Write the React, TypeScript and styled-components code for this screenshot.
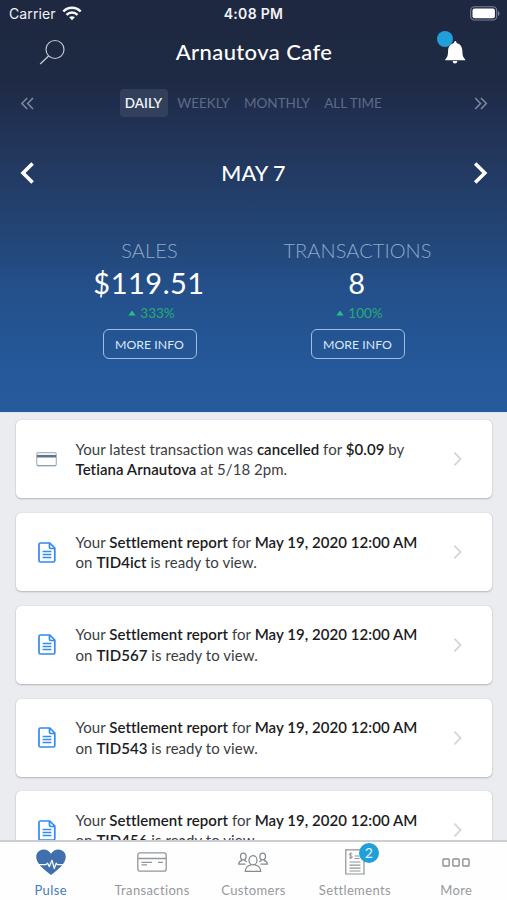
import React from "react";
import styled, { createGlobalStyle } from "styled-components";

const GlobalStyle = createGlobalStyle`
  * { box-sizing: border-box; }
  body { margin: 0; font-family: Lato, "Open Sans", sans-serif; }
  button { font-family: inherit; margin: 0; padding: 0; border: 0; background: none; color: inherit; }
  svg { display: block; flex: none; }
`;

const Screen = styled.div`
  display: flex;
  flex-direction: column;
  width: 507px;
  height: 900px;
  overflow: hidden;
  background: #ebecef;
`;

const Hero = styled.header`
  flex: none;
  height: 412px;
  background: linear-gradient(180deg, #1e2840 0, #1e2943 75px, #202f50 112px, #23365b 150px, #223f6c 200px, #234779 245px, #24508b 290px, #245594 340px, #25599b 375px, #265a9c 412px);
  border-bottom: 1px solid #265a9c;
  box-shadow: 0 1px 0 #dfe8f4;
`;

const StatusBar = styled.div`
  display: grid;
  grid-template-columns: 1fr auto 1fr;
  align-items: center;
  height: 27px;
  padding: 0 7px 0 9px;
  font-family: Inter, sans-serif;
  font-size: 14px;
  color: #f1f3f7;
`;

const Carrier = styled.div`
  display: flex;
  align-items: center;
  gap: 6px;
  letter-spacing: 0.1px;
`;

const Clock = styled.div`
  margin-right: 2px;
  font-weight: 600;
  font-size: 14px;
  letter-spacing: 0.3px;
`;

const Battery = styled.div`
  justify-self: end;
`;

const TitleBar = styled.div`
  display: grid;
  grid-template-columns: 60px 1fr 60px;
  align-items: center;
  height: 50px;
  padding: 0 22px;
`;

const Title = styled.h1`
  margin: 0 0 2px 1px;
  text-align: center;
  font-size: 22px;
  font-weight: 500;
  letter-spacing: 0.4px;
  color: #fff;
`;

const IconButton = styled.button<{ $side: "left" | "right" }>`
  display: flex;
  justify-content: ${(p) => (p.$side === "left" ? "flex-end" : "flex-start")};
  padding: ${(p) => (p.$side === "left" ? "0 17px 0 0" : "0 0 0 19px")};
`;

const BellWrap = styled.span`
  position: relative;
  display: block;
`;

const BellDot = styled.span`
  position: absolute;
  left: -7px;
  top: -9px;
  width: 16px;
  height: 16px;
  border-radius: 50%;
  background: #219fd8;
`;

const PeriodBar = styled.div`
  display: flex;
  align-items: center;
  justify-content: space-between;
  height: 52px;
  padding: 0 19px 0 21px;
`;

const Periods = styled.div`
  display: flex;
  padding-left: 2px;
`;

const Period = styled.button<{ $active?: boolean; $width: number }>`
  width: ${(p) => p.$width}px;
  height: 28px;
  border-radius: 4px;
  white-space: nowrap;
  font-size: 13.5px;
  font-weight: ${(p) => (p.$active ? 600 : 400)};
  letter-spacing: 0;
  color: ${(p) => (p.$active ? "#f0f3f8" : "#5f6b86")};
  background: ${(p) => (p.$active ? "#33405c" : "transparent")};
`;

const DateBar = styled.div`
  display: flex;
  align-items: center;
  justify-content: space-between;
  height: 50px;
  margin-top: 19px;
  padding: 0 19px 0 20px;
`;

const DateLabel = styled.div`
  margin: 0 1px 1px 0;
  font-size: 21.5px;
  font-weight: 500;
  letter-spacing: 0.1px;
  color: #fff;
`;

const Stats = styled.section`
  display: grid;
  grid-template-columns: 208px 208px;
  justify-content: center;
  margin-top: 39px;
`;

const Stat = styled.div`
  display: flex;
  flex-direction: column;
  align-items: center;
`;

const StatName = styled.div`
  height: 26px;
  line-height: 26px;
  font-size: 20px;
  font-weight: 300;
  letter-spacing: 0.08px;
  color: #8eaacb;
`;

const StatValue = styled.div`
  height: 40px;
  line-height: 40px;
  font-size: 29px;
  letter-spacing: 0.5px;
  margin-right: 1px;
  color: #fff;
`;

const StatChange = styled.div`
  display: flex;
  align-items: center;
  gap: 4px;
  height: 20px;
  margin-left: 4px;
  font-size: 13.5px;
  color: #27ab77;
`;

const MoreInfo = styled.button`
  width: 94px;
  height: 30px;
  margin-top: 6px;
  border: 1.5px solid #a4bbdb;
  border-radius: 6px;
  font-size: 12.3px;
  color: #dde7f4;
`;

const Feed = styled.main`
  flex: 1;
  min-height: 0;
  overflow: hidden;
  display: flex;
  flex-direction: column;
  gap: 14.8px;
  padding: 8.3px 15px 0 15.5px;
`;

const Card = styled.article`
  flex: none;
  display: grid;
  grid-template-columns: 60px 1fr 14px;
  align-items: center;
  height: 78px;
  padding-right: 26px;
  border-radius: 5px;
  background: #fff;
  box-shadow: 0 0 1px #aeb0b3, 0 1px 2px #b5b7ba;
`;

const CardIcon = styled.div`
  display: flex;
  justify-content: center;
  width: 62px;
`;

const Message = styled.p`
  margin: 0;
  white-space: nowrap;
  font-size: 15px;
  line-height: 20.6px;
  letter-spacing: 0.05px;
  color: #3c3d3f;
  b { font-weight: 600; color: #1b1c1e; }
`;

const TabBar = styled.nav`
  flex: none;
  display: grid;
  grid-template-columns: repeat(5, 1fr);
  height: 60px;
  border-top: 2px solid #cdced3;
  background: #fefefe;
`;

const Tab = styled.button<{ $active?: boolean }>`
  display: flex;
  flex-direction: column;
  align-items: center;
  color: ${(p) => (p.$active ? "#447bb9" : "#96999d")};
  font-size: 13px;
  letter-spacing: 0.36px;
`;

const TabIcon = styled.span`
  position: relative;
  display: flex;
  align-items: center;
  height: 40px;
`;

const Count = styled.span`
  position: absolute;
  left: 14px;
  top: 1px;
  width: 20px;
  height: 20px;
  border-radius: 50%;
  background: #219fd8;
  color: #e3f3fb;
  font-size: 14px;
  line-height: 20px;
  letter-spacing: 0;
`;

const Wifi = () => (
  <svg width="20" height="15" viewBox="0 0 20 15" fill="none" stroke="#f4f6fa" strokeWidth="2.5">
    <path d="M1.3 5.5C6.2.4 13.8.4 18.7 5.5" />
    <path d="M4.5 8.8c3.1-3.1 7.9-3.1 11 0" />
    <path d="M10 14.3l-2.9-3c1.7-1.5 4.1-1.5 5.8 0z" fill="#f4f6fa" stroke="none" />
  </svg>
);

const BatteryIcon = () => (
  <svg width="30" height="15" viewBox="0 0 30 15">
    <rect x="0.7" y="0.7" width="26" height="13.3" rx="3.7" fill="none" stroke="#7b8293" strokeWidth="1.1" />
    <rect x="2.5" y="2.5" width="22.4" height="9.7" rx="2" fill="#fff" />
    <path d="M28 5v5c2-.8 2-4.2 0-5z" fill="#7b8293" />
  </svg>
);

const Search = () => (
  <svg width="26" height="27" viewBox="0 0 26 27" fill="none" stroke="#c0c5d0" strokeWidth="1.2">
    <circle cx="16" cy="10.5" r="9" />
    <path d="M9.6 16.9L1.2 25" strokeWidth="1.4" />
  </svg>
);

const Bell = () => (
  <svg width="22" height="25" viewBox="0 0 22 25" fill="#fff">
    <path d="M11.300 1c.8 0 1.200.8 1.300 2 3.600.9 5.600 3.800 5.700 7.600.1 4.400.6 7 2.900 8.800v.8H1.200v-.8c2.300-1.800 2.800-4.400 2.900-8.800.1-3.800 2.300-6.700 5.900-7.600.1-1.200.5-2 1.300-2z" />
    <path d="M8.700 21h4.600c-.1 1.700-1 2.500-2.300 2.500S8.800 22.700 8.700 21z" />
  </svg>
);

const DoubleChevron = ({ flip }: { flip?: boolean }) => (
  <svg width="14" height="13" viewBox="0 0 14 13" fill="none" stroke="#7d879e" strokeWidth="1.600">
    {flip ? <path d="M1.2 1l5.3 5.5L1.200 12M7 1l5.300 5.500L7 12" /> : <path d="M6.200 1L.900 6.500 6.200 12M12 1L6.700 6.500l5.300 5.500" />}
  </svg>
);

const DayChevron = ({ flip }: { flip?: boolean }) => (
  <svg width="15" height="22" viewBox="0 0 15 22" fill="none" stroke="#fff" strokeWidth="3.600">
    <path d={flip ? "M2.200 1.500l9.600 9.500L2.200 20.500" : "M12.600 1.500L3 11l9.600 9.500"} />
  </svg>
);

const Up = () => (
  <svg width="8" height="6" viewBox="0 0 8 6" fill="#27c281">
    <path d="M4 .5L7.600 5.500H.4z" />
  </svg>
);

const CardGlyph = () => (
  <svg width="21" height="15" viewBox="0 0 21 15">
    <rect x="0.700" y="0.700" width="19.600" height="13" rx="1.500" fill="#fff" stroke="#a4b5c2" strokeWidth="1.200" />
    <path d="M1 4.200h19" stroke="#5f7486" strokeWidth="2.600" />
    <path d="M1 13.700h19" stroke="#8a9daa" />
  </svg>
);

const ReportGlyph = () => (
  <svg width="18" height="21" viewBox="0 0 18 21" fill="none" stroke="#318bf0" strokeWidth="1.700">
    <path d="M2.500 1h9.300l5 5.200v12.300a1.500 1.500 0 0 1-1.500 1.500H2.500A1.500 1.500 0 0 1 1 18.500v-16A1.500 1.500 0 0 1 2.500 1z" />
    <path d="M11.500 1v4.200c0 .9.500 1.300 1.300 1.300h4M4.600 9.500h8.800M4.600 12.500h8.800M4.600 15.500h8.800" />
  </svg>
);

const Next = () => (
  <svg width="11" height="16" viewBox="0 0 11 16" fill="none" stroke="#d5d6d8" strokeWidth="1.800">
    <path d="M2.400 1.700L8.600 8 2.400 14.300" />
  </svg>
);

const Pulse = () => (
  <svg width="30" height="27" viewBox="0 0 30 27">
    <path d="M15 26C10.500 22.300 5 18.500 2.100 13.700-.8 8.800-.2 4.200 3.200 1.900 7.400-.8 12.300.5 15 4.800 17.700.5 22.600-.8 26.800 1.900c3.400 2.300 4 6.900 1.100 11.800C25 18.500 19.500 22.300 15 26z" fill="#406fae" />
    <path d="M2.500 15.700h7.300l1.700-1.600 1.900 3.500 2.600-6.300 2.300 8.200 1.900-5.300 1.300 1.500h6" fill="none" stroke="#f6f9fd" strokeWidth="1.300" strokeLinejoin="round" />
  </svg>
);

const Transactions = () => (
  <svg width="30" height="20" viewBox="0 0 30 20" fill="none" stroke="#92979b" strokeWidth="1.300">
    <rect x="0.800" y="0.800" width="28.400" height="18.400" rx="2.200" />
    <path d="M1 6.500h28M4.500 10.300h10.500M4.500 12.900h5.500M21 10.300h5" />
  </svg>
);

const Customers = () => (
  <svg width="30" height="20" viewBox="0 0 30 20" fill="none" stroke="#858a8f" strokeWidth="1.250" strokeLinejoin="round">
    <ellipse cx="15" cy="8.200" rx="4" ry="4.600" />
    <path d="M12.500 12.200v1c-3.200 1-5 2-5.200 6.200h15.400c-.2-4.200-2-5.200-5.200-6.200v-1" />
    <ellipse cx="5.300" cy="4.500" rx="2.800" ry="3.300" />
    <path d="M3.700 7.300v1.400C1.700 9.200.7 10.200.7 12.200H7.500M6.900 7.300v1.400l2 1" />
    <ellipse cx="24.700" cy="4.500" rx="2.800" ry="3.300" />
    <path d="M26.300 7.300v1.400c2 .5 3 1.500 3 3.500H22.500M23.100 7.300v1.400l-2 1" />
  </svg>
);

const Settlements = () => (
  <svg width="20" height="26" viewBox="0 0 20 26" fill="none" stroke="#8d9296" strokeWidth="1.200">
    <path d="M.8.800h14l4.200 4.200v20H.800zM9.500 7h5M9.500 9.500h5M4.500 13h11M4.500 16.200h11M4.500 19.200h11M4.500 22h11" />
    <path d="M7.300 4.700c-1-.8-3-.5-3 .7 0 1.600 3 .9 3 2.600 0 1.300-2.200 1.500-3.300.5M5.700 3.700v6" strokeWidth="1" />
  </svg>
);

const More = () => (
  <svg width="28" height="9" viewBox="0 0 28 9" fill="none" stroke="#8d9296" strokeWidth="1.400">
    <rect x="1" y="1" width="6.200" height="7" rx="0.800" />
    <rect x="10.900" y="1" width="6.200" height="7" rx="0.800" />
    <rect x="20.800" y="1" width="6.200" height="7" rx="0.800" />
  </svg>
);

const periods = [
  { label: "DAILY", width: 48, active: true },
  { label: "WEEKLY", width: 72 },
  { label: "MONTHLY", width: 75 },
  { label: "ALL TIME", width: 77 },
];

const stats = [
  { name: "SALES", value: "$119.51", change: "333%" },
  { name: "TRANSACTIONS", value: "8", change: "100%" },
];

const reports = ["TID4ict", "TID567", "TID543", "TID456"];

const tabs = [
  { label: "Pulse", icon: <Pulse />, active: true },
  { label: "Transactions", icon: <Transactions /> },
  { label: "Customers", icon: <Customers /> },
  { label: "Settlements", icon: <Settlements />, count: 2 },
  { label: "More", icon: <More /> },
];

export default function App() {
  return (
    <Screen>
      <GlobalStyle />
      <Hero>
        <StatusBar>
          <Carrier>Carrier <Wifi /></Carrier>
          <Clock>4:08 PM</Clock>
          <Battery><BatteryIcon /></Battery>
        </StatusBar>
        <TitleBar>
          <IconButton $side="left" aria-label="Search"><Search /></IconButton>
          <Title>Arnautova Cafe</Title>
          <IconButton $side="right" aria-label="Notifications">
            <BellWrap><Bell /><BellDot /></BellWrap>
          </IconButton>
        </TitleBar>
        <PeriodBar>
          <DoubleChevron />
          <Periods>
            {periods.map((p) => (
              <Period key={p.label} $active={p.active} $width={p.width}>{p.label}</Period>
            ))}
          </Periods>
          <DoubleChevron flip />
        </PeriodBar>
        <DateBar>
          <DayChevron />
          <DateLabel>MAY 7</DateLabel>
          <DayChevron flip />
        </DateBar>
        <Stats>
          {stats.map((s) => (
            <Stat key={s.name}>
              <StatName>{s.name}</StatName>
              <StatValue>{s.value}</StatValue>
              <StatChange><Up />{s.change}</StatChange>
              <MoreInfo>MORE INFO</MoreInfo>
            </Stat>
          ))}
        </Stats>
      </Hero>
      <Feed>
        <Card>
          <CardIcon><CardGlyph /></CardIcon>
          <Message>
            Your latest transaction was <b>cancelled</b> for <b>$0.09</b> by<br />
            <b>Tetiana Arnautova</b> at 5/18 2pm.
          </Message>
          <Next />
        </Card>
        {reports.map((id) => (
          <Card key={id}>
            <CardIcon><ReportGlyph /></CardIcon>
            <Message>
              Your <b>Settlement report</b> for <b>May 19, 2020 12:00 AM</b><br />
              on <b>{id}</b> is ready to view.
            </Message>
            <Next />
          </Card>
        ))}
      </Feed>
      <TabBar>
        {tabs.map((t) => (
          <Tab key={t.label} $active={t.active}>
            <TabIcon>{t.icon}{t.count && <Count>{t.count}</Count>}</TabIcon>
            {t.label}
          </Tab>
        ))}
      </TabBar>
    </Screen>
  );
}
